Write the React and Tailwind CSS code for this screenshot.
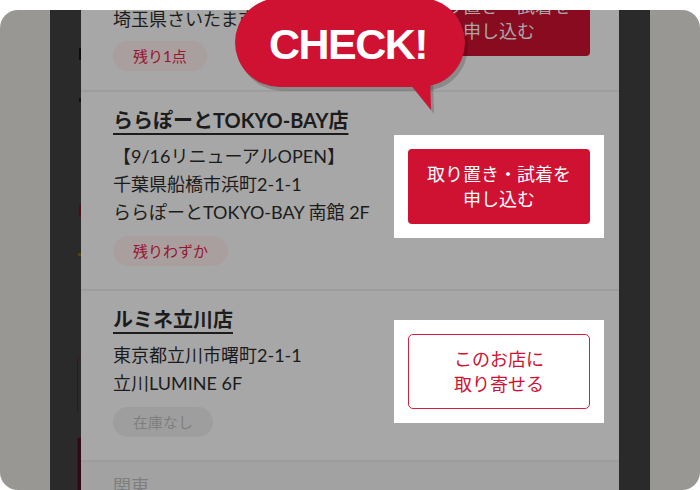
import React from "react";

const font = "font-['Lato','Noto_Sans_CJK_JP',sans-serif]";

function Pill({ children, tone = "red", className = "" }) {
  const colors =
    tone === "red"
      ? "bg-[#aa9f9f] text-[#961530]"
      : "bg-[#9e9e9e] text-[#7e7e7e]";
  return (
    <div className={className}>
      <span className={`inline-flex h-[30px] items-center rounded-full px-[20px] text-[15px] ${colors}`}>
        {children}
      </span>
    </div>
  );
}

function StoreItem({ name, lines, pill, tone, button }) {
  return (
    <div className="flex items-center justify-between pl-[32px] pt-[15px] pb-[23px]">
      <div className="min-w-0">
        <p className="text-[20px] font-bold leading-[26px] text-[#1c1c1c] underline decoration-2 underline-offset-[5px]">
          {name}
        </p>
        <div className="mt-[9px] text-[18px] leading-[28px] text-[#1c1c1c]">
          {lines.map((l) => (
            <p key={l} className="whitespace-nowrap">{l}</p>
          ))}
        </div>
        <Pill tone={tone} className="mt-[10px]">{pill}</Pill>
      </div>
      <div className="mr-[15px] w-[210px] shrink-0 bg-white p-[14px]">{button}</div>
    </div>
  );
}

export default function App() {
  return (
    <div className={`relative h-[490px] w-[700px] overflow-hidden bg-white pt-[10px] ${font}`}>
      <div className="flex h-[480px] overflow-hidden rounded-[18px] bg-[#999794]">
        <div className="w-[50px] shrink-0" />

        {/* 뒤쪽 페이지가 살짝 보이는 어두운 영역 */}
        <div className="relative w-[31px] shrink-0 bg-[#2a2a2a]">
          <span className="absolute left-[29px] top-[38px] h-[12px] w-[2px] bg-[#0c0c0c]" />
          <span className="absolute left-[29px] top-[88px] h-[4px] w-[2px] bg-[#101010]" />
          <span className="absolute left-[29px] top-[195px] h-[12px] w-[2px] bg-[#4a0d18]" />
          <span className="absolute left-[28px] top-[243px] h-[3px] w-[3px] bg-[#4f4016]" />
          <span className="absolute left-[27px] top-[347px] h-[56px] w-[4px] rounded-tl-[3px] border-l border-t border-[#4a0d1c]" />
          <span className="absolute left-[27px] top-[428px] h-[60px] w-[4px] bg-[#2f0a12] border-l border-[#4a0d1c]" />
        </div>

        <div className="w-[538px] shrink-0 overflow-hidden bg-[#a7a7a7]">
          {/* 잘린 첫 번째 매장 */}
          <div className="flex items-start justify-between pl-[32px] pb-[19px]">
            <div className="-mt-[5px] min-w-0">
              <p className="whitespace-nowrap text-[18px] leading-[28px] text-[#1c1c1c]">埼玉県さいたま市大宮区</p>
              <Pill className="mt-[8px]">残り1点</Pill>
            </div>
            <div className="-mt-[43px] mr-[15px] w-[210px] shrink-0 p-[14px]">
              <div className="flex h-[75px] flex-col items-center justify-center rounded-[4px] bg-[#890b20] text-[18px] leading-[25px] text-[#a7a7a7]">
                <span>取り置き・試着を</span>
                <span>申し込む</span>
              </div>
            </div>
          </div>
          <div className="h-[2px] bg-[#9d9d9d]" />

          <StoreItem
            name="ららぽーとTOKYO-BAY店"
            lines={["【9/16リニューアルOPEN】", "千葉県船橋市浜町2-1-1", "ららぽーとTOKYO-BAY 南館 2F"]}
            pill="残りわずか"
            tone="red"
            button={
              <button className="flex h-[75px] w-full flex-col items-center justify-center rounded-[4px] bg-[#cf1132] text-[18px] leading-[25px] text-white">
                <span>取り置き・試着を</span>
                <span>申し込む</span>
              </button>
            }
          />
          <div className="h-[2px] bg-[#9d9d9d]" />

          <StoreItem
            name="ルミネ立川店"
            lines={["東京都立川市曙町2-1-1", "立川LUMINE 6F"]}
            pill="在庫なし"
            tone="gray"
            button={
              <button className="flex h-[75px] w-full flex-col items-center justify-center rounded-[5px] border-[1.5px] border-[#d2203e] bg-white text-[18px] leading-[25px] text-[#cf1132]">
                <span>このお店に</span>
                <span>取り寄せる</span>
              </button>
            }
          />
          <div className="h-[2px] bg-[#9d9d9d]" />

          <div className="h-[40px] bg-[#a2a2a2] pl-[32px] pt-[10px] text-[18px] leading-[28px] text-[#7f7f7f]">関東</div>
        </div>

        <div className="w-[31px] shrink-0 bg-[#2a2a2a]" />
      </div>

      {/* CHECK! 말풍선 */}
      <div className="absolute left-[230px] top-[-4px] h-[122px] w-[245px]">
        <svg className="absolute inset-0" width="245" height="122" viewBox="0 0 245 122">
          <g fill="rgba(0,0,0,0.17)" transform="translate(3 4)">
            <rect x="5" y="2" width="230" height="89" rx="44.5" />
            <polygon points="172,78 200,78 201,114" />
          </g>
          <g fill="#cf1132">
            <rect x="5" y="2" width="230" height="89" rx="44.5" />
            <polygon points="172,78 200,78 201,114" />
          </g>
        </svg>
        <div className="absolute left-[3px] top-[4px] flex h-[89px] w-[230px] items-center justify-center">
          <span className="font-['Liberation_Sans',Arial,sans-serif] text-[43px] font-bold leading-none tracking-[-1.5px] text-white">CHECK!</span>
        </div>
      </div>
    </div>
  );
}
